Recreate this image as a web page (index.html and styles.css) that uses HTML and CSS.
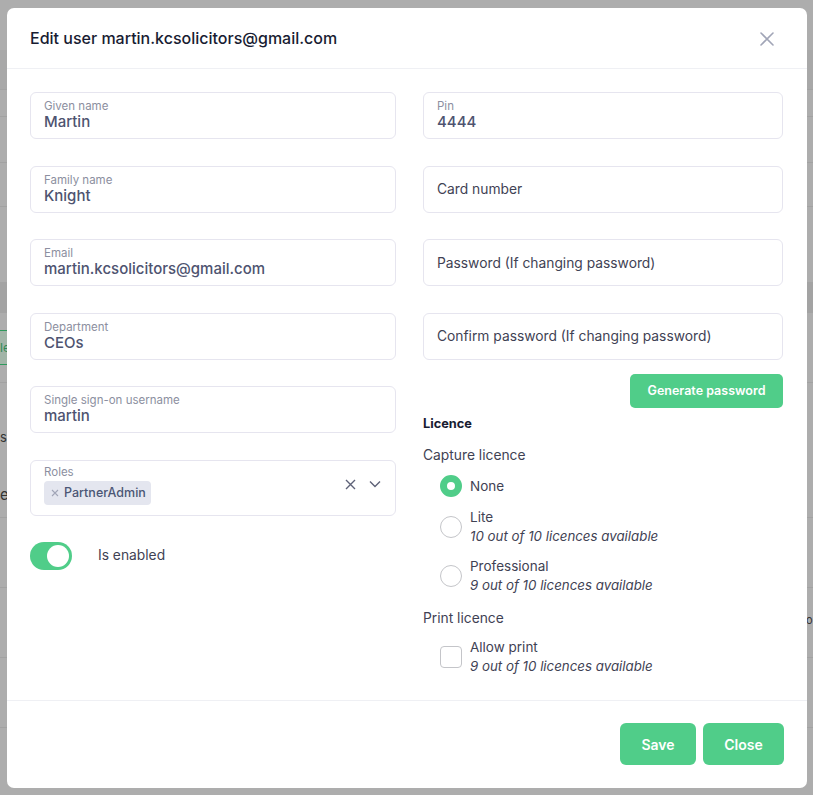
FILE: index.html
```html
<!DOCTYPE html>
<html>
<head>
<meta charset="utf-8">
<link rel="stylesheet" href="styles.css">
</head>
<body>
<div class="backdrop">
  <div class="bg-row r1"></div>
  <div class="bg-row r2"></div>
  <div class="bg-row r3"></div>
  <div class="bg-row r4"></div>
  <div class="bg-row r5"></div>
  <div class="bg-row r6"></div>
  <div class="bg-row r7"></div>
  <div class="bg-row r8"><span class="bg-btn">le</span></div>
  <div class="bg-row r9"><span class="bg-txt t1">s</span><span class="bg-txt t2">e</span></div>
  <div class="bg-row r10"></div>
  <div class="bg-row r11"><span class="bg-txt t3">o</span></div>
  <div class="bg-row r12"></div>
  <div class="bg-row r13"></div>
</div>

<div class="modal">
  <div class="modal-header">
    <h1 class="modal-title">Edit user martin.kcsolicitors@gmail.com</h1>
    <svg class="close-icon" width="16" height="16" viewBox="0 0 16 16"><path d="M2 2 L14 14 M14 2 L2 14" stroke="#a1a5b7" stroke-width="1.6" stroke-linecap="round" fill="none"/></svg>
  </div>

  <div class="modal-body">
    <div class="col col-left">
      <div class="field">
        <div class="field-label">Given name</div>
        <div class="field-value">Martin</div>
      </div>
      <div class="field">
        <div class="field-label">Family name</div>
        <div class="field-value">Knight</div>
      </div>
      <div class="field">
        <div class="field-label">Email</div>
        <div class="field-value">martin.kcsolicitors@gmail.com</div>
      </div>
      <div class="field">
        <div class="field-label">Department</div>
        <div class="field-value">CEOs</div>
      </div>
      <div class="field">
        <div class="field-label">Single sign-on username</div>
        <div class="field-value">martin</div>
      </div>
      <div class="field field-select">
        <div class="select-main">
          <div class="field-label">Roles</div>
          <div class="chip">
            <svg width="8" height="8" viewBox="0 0 8 8"><path d="M1 1 L7 7 M7 1 L1 7" stroke="#a1a5b7" stroke-width="1.1" fill="none"/></svg>
            <span>PartnerAdmin</span>
          </div>
        </div>
        <div class="select-icons">
          <svg width="11" height="11" viewBox="0 0 11 11"><path d="M1 1 L10 10 M10 1 L1 10" stroke="#5e6278" stroke-width="1.4" fill="none"/></svg>
          <svg width="12" height="8" viewBox="0 0 12 8"><path d="M1 1.5 L6 6.5 L11 1.5" stroke="#5e6278" stroke-width="1.4" fill="none"/></svg>
        </div>
      </div>
      <div class="toggle-row">
        <span class="toggle"><span class="knob"></span></span>
        <span class="toggle-label">Is enabled</span>
      </div>
    </div>

    <div class="col col-right">
      <div class="field">
        <div class="field-label">Pin</div>
        <div class="field-value">4444</div>
      </div>
      <div class="field field-empty">Card number</div>
      <div class="field field-empty">Password (If changing password)</div>
      <div class="field field-empty">Confirm password (If changing password)</div>
      <div class="gen-row">
        <button class="btn btn-small">Generate password</button>
      </div>
      <div class="licence-title">Licence</div>
      <div class="group-title gt-capture">Capture licence</div>
      <div class="option opt-none">
        <span class="radio radio-on"></span>
        <div class="opt-text"><div class="opt-name">None</div></div>
      </div>
      <div class="option">
        <span class="radio"></span>
        <div class="opt-text">
          <div class="opt-name">Lite</div>
          <div class="opt-sub">10 out of 10 licences available</div>
        </div>
      </div>
      <div class="option">
        <span class="radio"></span>
        <div class="opt-text">
          <div class="opt-name">Professional</div>
          <div class="opt-sub">9 out of 10 licences available</div>
        </div>
      </div>
      <div class="group-title gt-print">Print licence</div>
      <div class="option">
        <span class="checkbox"></span>
        <div class="opt-text">
          <div class="opt-name">Allow print</div>
          <div class="opt-sub">9 out of 10 licences available</div>
        </div>
      </div>
    </div>
  </div>

  <div class="modal-footer">
    <button class="btn btn-save">Save</button>
    <button class="btn btn-close">Close</button>
  </div>
</div>
</body>
</html>
```
FILE: styles.css
```css
* { box-sizing: border-box; }
html, body { margin: 0; padding: 0; }
body {
  width: 813px;
  height: 795px;
  overflow: hidden;
  background: #adadad;
  font-family: Inter, "Noto Sans", sans-serif;
  position: relative;
}

/* backdrop page (dimmed) */
.backdrop { display: flex; flex-direction: column; }
.bg-row { position: relative; border-bottom: 1px solid #a2a2a2; }
.r1 { height: 50px; border-bottom: none; }
.r2 { height: 40px; background: #a8a8a8; }
.r3 { height: 27px; }
.r4 { height: 46px; }
.r5 { height: 44px; }
.r6 { height: 75px; border-bottom: none; }
.r7 { height: 31px; background: #a3a3a3; border-bottom: none; }
.r8 { height: 70px; }
.r9 { height: 135px; }
.r10 { height: 70px; }
.r11 { height: 70px; }
.r12 { height: 70px; }
.r13 { height: 60px; border-bottom: none; }
.bg-btn {
  position: absolute; left: 0; top: 17px;
  height: 35px; width: 12px;
  border-top: 1px solid #2d9a5c; border-bottom: 1px solid #2d9a5c;
  background: #a2b5a8;
  color: #2f8a55; font-size: 12px; line-height: 33px;
}
.bg-txt { position: absolute; color: #333; font-size: 13px; }
.t1 { left: 0; top: 46px; }
.t2 { left: 0; top: 102px; font-size: 15px; }
.t3 { left: 806px; top: 25px; font-size: 11px; }

/* modal */
.modal {
  position: absolute;
  left: 7px; top: 8px;
  width: 800px; height: 780px;
  background: #fff;
  border-radius: 7px;
  display: flex; flex-direction: column;
}
.modal-header {
  height: 61px;
  border-bottom: 1px solid #eff0f4;
  display: flex; align-items: center; justify-content: space-between;
  padding: 0 32px 0 23px;
}
.modal-title {
  margin: 0;
  font-size: 16px; font-weight: 500;
  color: #181c32;
}
.close-icon { margin-top: 1px; }

.modal-body {
  flex: 1;
  display: grid;
  grid-template-columns: 366px 360px;
  column-gap: 27px;
  padding: 23px 0 0 23px;
  align-items: start;
}
.col { display: flex; flex-direction: column; }
.col-left .field + .field { margin-top: 26.5px; }
.col-right > .field + .field { margin-top: 26.5px; }

.field {
  border: 1px solid #e6e5ef;
  border-radius: 6px;
  height: 47px;
  padding: 6px 13px 7px 13px;
  background: #fff;
}
.field-label {
  font-size: 11.5px; line-height: 14px;
  color: #8c8fa0;
}
.field-value {
  font-size: 15px; line-height: 18px;
  font-weight: 500;
  color: #4e5370;
}
.field-empty {
  display: flex; align-items: center;
  font-size: 13.8px; color: #3f4254;
  padding-top: 0; padding-bottom: 0;
}
.field-select {
  height: 56px;
  padding: 4px 14px 10px 13px;
  display: flex; align-items: center; justify-content: space-between;
}
.select-main { align-self: flex-start; }
.chip {
  margin-top: 2px;
  height: 24px;
  display: inline-flex; align-items: center; gap: 5px;
  padding: 0 5px 0 7px;
  background: #e4e6ef;
  border-radius: 4px;
  font-size: 12.5px; font-weight: 500; color: #4b5675;
}
.select-icons { display: flex; align-items: center; gap: 13px; margin-top: -1px; }

.toggle-row {
  margin-top: 26.5px;
  display: flex; align-items: center;
}
.toggle {
  width: 42px; height: 28px;
  border-radius: 14px;
  background: #50cd89;
  display: flex; align-items: center; justify-content: flex-end;
  padding-right: 3px;
}
.knob { width: 22px; height: 22px; border-radius: 50%; background: #fff; }
.toggle-label { margin-left: 26px; font-size: 13.8px; color: #3f4254; margin-top: -2px; }

.gen-row { display: flex; justify-content: flex-end; margin-top: 14px; }
.btn {
  border: none;
  background: #50cd89;
  color: #fff;
  font-family: inherit;
  font-weight: 600;
  cursor: pointer;
}
.btn-small {
  width: 153px; height: 34px;
  border-radius: 5px;
  font-size: 12.5px;
}
.licence-title {
  margin-top: 7px;
  font-size: 12.8px; line-height: 18px; font-weight: 700;
  color: #181c32;
}
.group-title {
  font-size: 13.8px; line-height: 18px;
  color: #3f4254;
}
.gt-capture { margin-top: 13px; }
.gt-print { margin-top: 14px; }

.option {
  display: flex; align-items: center;
  margin-top: 11px;
  padding-left: 17px;
}
.opt-none { margin-top: 11px; }
.radio, .checkbox {
  flex: none;
  width: 22px; height: 22px;
  border: 1px solid #c4c5c9;
  background: #fff;
}
.radio { border-radius: 50%; }
.checkbox { border-radius: 4px; }
.radio-on {
  border: 7px solid #50cd89;
  background: #fff;
}
.opt-text { margin-left: 8px; }
.opt-name { font-size: 13.5px; line-height: 19px; color: #3f4254; }
.opt-none .opt-name { line-height: 22px; }
.opt-sub { font-size: 13.3px; line-height: 19px; font-style: italic; color: #3f4254; }

.modal-footer {
  height: 88px;
  border-top: 1px solid #eff0f4;
  display: flex; justify-content: flex-end; align-items: flex-start;
  padding: 22px 23px 0 0;
  gap: 7px;
}
.btn-save, .btn-close {
  height: 42px;
  border-radius: 6px;
  font-size: 14px;
}
.btn-save { width: 76px; }
.btn-close { width: 81px; }
```
